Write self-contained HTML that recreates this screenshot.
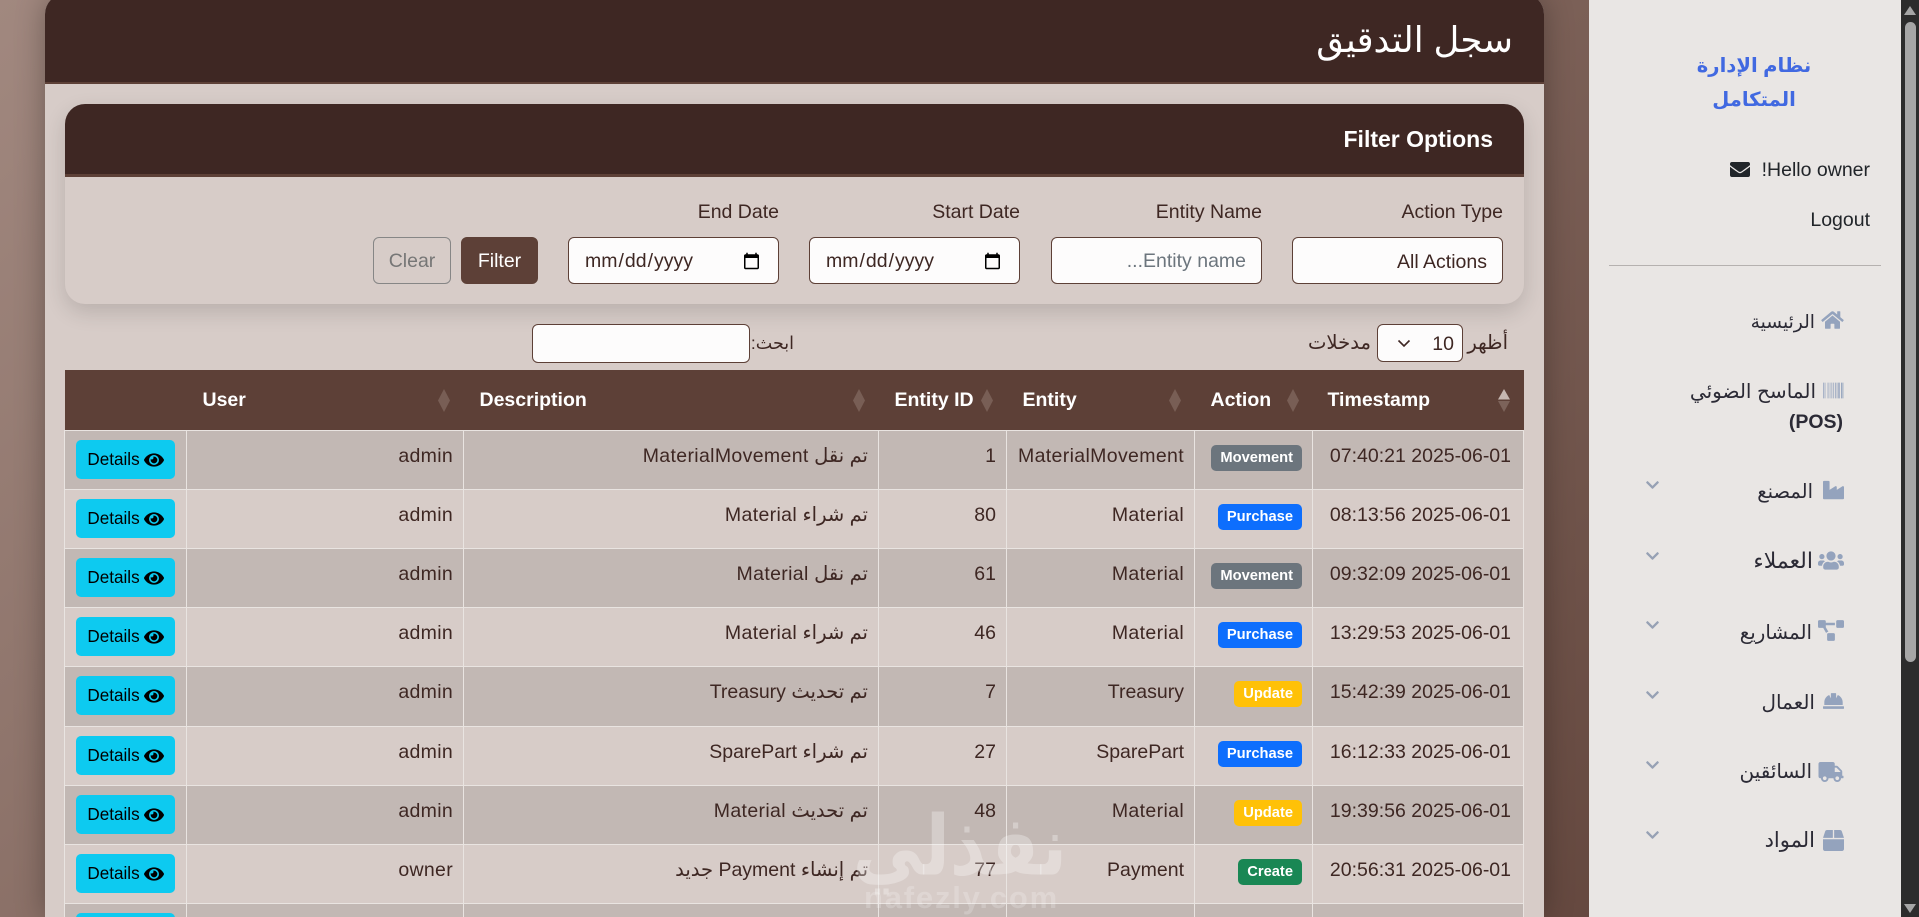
<!DOCTYPE html>
<html lang="ar" dir="rtl">
<head>
<meta charset="utf-8">
<title>سجل التدقيق</title>
<style>
*{box-sizing:border-box}
html,body{margin:0;padding:0;width:1919px;height:917px;overflow:hidden}
body{position:relative;background:linear-gradient(135deg,#a1887f,#5d4037);font-family:"Liberation Sans","DejaVu Sans",sans-serif;font-size:19.5px;color:#3e2723}
.clip{position:absolute;left:0;top:0;width:1919px;height:917px;overflow:hidden}
.main{position:absolute;left:45px;top:-6px;width:1499px;height:923px;background:#d7ccc8;border-radius:20px 20px 0 0;box-shadow:0 0 30px rgba(0,0,0,.3)}
.main-head{position:absolute;left:0;right:0;top:0;height:90px;background:#3e2723;border-bottom:2px solid #5d4037;border-radius:20px 20px 0 0}
.main-head h1{position:absolute;right:31px;top:23px;margin:0;font-weight:400;font-size:35.5px;line-height:46px;color:#fff;white-space:nowrap}
.fcard{position:absolute;left:65px;top:104px;width:1459px;height:200px;background:#d7ccc8;border-radius:20px;box-shadow:0 8px 22px rgba(0,0,0,.14)}
.fhead{position:absolute;left:0;right:0;top:0;height:73px;background:#3e2723;border-bottom:3px solid #5d4037;border-radius:20px 20px 0 0}
.fhead h2{position:absolute;right:31px;top:17px;margin:0;font-size:23px;line-height:36px;color:#fff;font-weight:700;white-space:nowrap}
.lab{position:absolute;top:94px;line-height:28px;text-align:right;white-space:nowrap}
.ctl{position:absolute;top:133px;height:47px;background:#fdfcfc;border:1px solid #5d4037;border-radius:6px;font:19.5px "Liberation Sans",sans-serif;color:#3e2723;padding:2px 15px 0;outline:0;margin:0}
select.ctl{appearance:none;-webkit-appearance:none}
input::placeholder{color:#6c757d;opacity:1}
.btn{position:absolute;top:133px;height:47px;border-radius:6px;font:19.5px "Liberation Sans",sans-serif;padding:2px 0 0;margin:0;text-align:center}
.dt-l{position:absolute;white-space:nowrap;line-height:28px;top:329px}
.tbl{position:absolute;left:64px;top:370px;width:1459px;border-collapse:collapse;table-layout:fixed}
th{height:60px;background:#5d4037;color:#fff;font-weight:700;text-align:left;padding:2px 16px 0;position:relative;white-space:nowrap;font-size:19.5px}
th:first-child{padding-left:15px}
th svg{position:absolute;right:13px;top:19px}
td{height:59px;border:1px solid #e9e4e1;padding:11.5px 10px 0;vertical-align:top;text-align:right;white-space:nowrap;line-height:28px;color:#3e2723}
tr:nth-child(odd) td{background:#c2b8b4}
tr:nth-child(even) td{background:#d7ccc8}
tr.t td{height:60px}
td:first-child{padding-right:12px}
td.u{letter-spacing:.3px}
td.act{padding:9.5px 0 0;text-align:center}
.w{font-style:normal;letter-spacing:.35px}
.bd{display:inline-block;margin-top:3px;height:26px;line-height:26px;padding:0 9px;border-radius:5px;font-size:14.7px;font-weight:700;color:#fff;vertical-align:top}
.mv{background:#6c757d}.pu{background:#0d6efd}.up{background:#ffc107}.cr{background:#198754}
.det{display:inline-flex;align-items:center;justify-content:center;gap:4px;width:99px;height:39px;background:#0dcaf0;border-radius:5px;color:#000;font-size:17.1px;line-height:39px}
.side{position:absolute;left:1589px;top:0;width:312px;height:917px;background:#e9e6e4}
.brand{position:absolute;left:1654px;width:200px;text-align:center;font-weight:700;color:#4169e1;font-size:19.6px;line-height:33.5px;top:50px}
.s{position:absolute;white-space:nowrap;color:#212529}
.m{position:absolute;white-space:nowrap;color:#2b2a35;font-size:19.5px;line-height:28px;text-align:right}
.ic{position:absolute;fill:#94a3bd}
.ch{position:absolute;fill:#97a1b4;left:1646px}
.track{position:absolute;left:1901px;top:0;width:18px;height:917px;background:#2c2c2c}
.thumb{position:absolute;left:1905px;top:22px;width:11px;height:640px;background:#a6a6a6;border-radius:6px}
.wm{position:absolute;color:rgba(255,255,255,.3);white-space:nowrap;pointer-events:none}
</style>
</head>
<body>
<svg width="0" height="0" style="position:absolute"><defs>
<symbol id="eye" viewBox="0 0 576 512"><path d="M572.52 241.4C518.29 135.59 410.93 64 288 64S57.68 135.64 3.48 241.41a32.35 32.35 0 0 0 0 29.19C57.71 376.41 165.07 448 288 448s230.32-71.64 284.52-177.41a32.35 32.35 0 0 0 0-29.19zM288 400a144 144 0 1 1 144-144 143.93 143.93 0 0 1-144 144zm0-240a95.31 95.31 0 0 0-25.31 3.79 47.85 47.85 0 0 1-66.9 66.9A95.78 95.78 0 1 0 288 160z"/></symbol>
<symbol id="chev" viewBox="0 100 448 310"><path d="M207.029 381.476L12.686 187.132c-9.373-9.373-9.373-24.569 0-33.941l22.667-22.667c9.357-9.357 24.522-9.375 33.901-.04L224 284.505l154.745-154.021c9.379-9.335 24.544-9.317 33.901.04l22.667 22.667c9.373 9.373 9.373 24.569 0 33.941L240.971 381.476c-9.373 9.372-24.569 9.372-33.942 0z"/></symbol>
<symbol id="sort" viewBox="0 0 14 23"><path d="M7 0l6 11.5H1zM7 23l6-11.5H1z" fill="#785e55"/></symbol>
</defs></svg>

<div class="clip">
<div class="main"><div class="main-head"><h1>سجل التدقيق</h1></div></div>

<div class="fcard">
  <div class="fhead"><h2>Filter Options</h2></div>
  <label class="lab" style="right:21px">Action Type</label>
  <label class="lab" style="right:262px">Entity Name</label>
  <label class="lab" style="right:504px">Start Date</label>
  <label class="lab" style="right:745px">End Date</label>
  <select class="ctl" dir="rtl" style="left:1227px;width:211px"><option>All Actions</option></select>
  <input class="ctl" dir="rtl" style="left:986px;width:211px" placeholder="Entity name...">
  <input class="ctl" dir="ltr" type="date" style="left:744px;width:211px">
  <input class="ctl" dir="ltr" type="date" style="left:503px;width:211px">
  <button class="btn" style="left:396px;width:77px;background:#5d4037;border:1px solid #5d4037;color:#fff">Filter</button>
  <button class="btn" style="left:308px;width:78px;background:transparent;border:1px solid #868686;color:#767676">Clear</button>
</div>

<div class="dt-l" style="right:411px;font-size:19.5px">أظهر</div>
<select class="ctl" dir="rtl" style="left:1377px;top:324px;width:86px;height:38px;padding:2px 8px 0 0;font-size:19.5px"><option>10</option></select>
<svg style="position:absolute;left:1397px;top:339px" width="14" height="9" viewBox="0 0 14 9"><path d="M1.5 1.5 7 7l5.5-5.5" fill="none" stroke="#3e2723" stroke-width="1.6"/></svg>
<div class="dt-l" style="right:548px;font-size:19.6px">مدخلات</div>
<div class="dt-l" style="right:1125px;font-size:17.5px">ابحث:</div>
<input class="ctl" style="left:532px;top:324px;width:218px;height:39px;padding:0 6px">

<table class="tbl">
<colgroup><col style="width:211px"><col style="width:118px"><col style="width:188px"><col style="width:128px"><col style="width:415px"><col style="width:277px"><col style="width:122px"></colgroup>
<thead><tr>
<th>Timestamp<svg width="14" height="23" viewBox="0 0 14 23"><path d="M7 0l6 10.5H1z" fill="#c6b7b1"/><path d="M7 23l6-11H1z" fill="#7c635a"/></svg></th>
<th>Action<svg width="14" height="23"><use href="#sort"/></svg></th>
<th>Entity<svg width="14" height="23"><use href="#sort"/></svg></th>
<th>Entity ID<svg width="14" height="23"><use href="#sort"/></svg></th>
<th>Description<svg width="14" height="23"><use href="#sort"/></svg></th>
<th>User<svg width="14" height="23"><use href="#sort"/></svg></th>
<th></th>
</tr></thead>
<tbody>
<tr><td>2025-06-01 07:40:21</td><td><span class="bd mv">Movement</span></td><td><i class="w">MaterialMovement</i></td><td>1</td><td>تم نقل <i class="w">MaterialMovement</i></td><td class="u">admin</td><td class="act"><a class="det"><svg width="20" height="18"><use href="#eye"/></svg>Details</a></td></tr>
<tr><td>2025-06-01 08:13:56</td><td><span class="bd pu">Purchase</span></td><td><i class="w">Material</i></td><td>80</td><td>تم شراء <i class="w">Material</i></td><td class="u">admin</td><td class="act"><a class="det"><svg width="20" height="18"><use href="#eye"/></svg>Details</a></td></tr>
<tr><td>2025-06-01 09:32:09</td><td><span class="bd mv">Movement</span></td><td><i class="w">Material</i></td><td>61</td><td>تم نقل <i class="w">Material</i></td><td class="u">admin</td><td class="act"><a class="det"><svg width="20" height="18"><use href="#eye"/></svg>Details</a></td></tr>
<tr><td>2025-06-01 13:29:53</td><td><span class="bd pu">Purchase</span></td><td><i class="w">Material</i></td><td>46</td><td>تم شراء <i class="w">Material</i></td><td class="u">admin</td><td class="act"><a class="det"><svg width="20" height="18"><use href="#eye"/></svg>Details</a></td></tr>
<tr class="t"><td>2025-06-01 15:42:39</td><td><span class="bd up">Update</span></td><td>Treasury</td><td>7</td><td>تم تحديث Treasury</td><td class="u">admin</td><td class="act"><a class="det"><svg width="20" height="18"><use href="#eye"/></svg>Details</a></td></tr>
<tr><td>2025-06-01 16:12:33</td><td><span class="bd pu">Purchase</span></td><td>SparePart</td><td>27</td><td>تم شراء SparePart</td><td class="u">admin</td><td class="act"><a class="det"><svg width="20" height="18"><use href="#eye"/></svg>Details</a></td></tr>
<tr><td>2025-06-01 19:39:56</td><td><span class="bd up">Update</span></td><td><i class="w">Material</i></td><td>48</td><td>تم تحديث <i class="w">Material</i></td><td class="u">admin</td><td class="act"><a class="det"><svg width="20" height="18"><use href="#eye"/></svg>Details</a></td></tr>
<tr><td>2025-06-01 20:56:31</td><td><span class="bd cr">Create</span></td><td>Payment</td><td>77</td><td>تم إنشاء Payment جديد</td><td class="u">owner</td><td class="act"><a class="det"><svg width="20" height="18"><use href="#eye"/></svg>Details</a></td></tr>
<tr><td>&nbsp;</td><td></td><td></td><td></td><td></td><td></td><td class="act"><a class="det"></a></td></tr>
</tbody>
</table>

<div class="side"></div>
<div class="brand">نظام الإدارة<br>المتكامل</div>
<div class="s" style="right:49px;top:156px;line-height:28px">Hello owner!</div>
<svg style="position:absolute;left:1730px;top:162px;fill:#212529" width="20" height="15" viewBox="0 64 512 384"><path d="M502.3 190.8c3.9-3.1 9.7-.2 9.7 4.7V400c0 26.5-21.5 48-48 48H48c-26.5 0-48-21.5-48-48V195.6c0-5 5.7-7.8 9.7-4.7 22.4 17.4 52.1 39.5 154.1 113.6 21.1 15.4 56.7 47.8 92.2 47.6 35.7.3 72-32.8 92.3-47.6 102-74.1 131.6-96.3 154-113.7zM256 320c23.2.4 56.6-29.2 73.4-41.4 132.7-96.3 142.8-104.7 173.4-128.7 5.8-4.5 9.2-11.5 9.2-18.9v-19c0-26.5-21.5-48-48-48H48C21.5 64 0 85.5 0 112v19c0 7.4 3.4 14.3 9.2 18.9 30.6 23.9 40.7 32.4 173.4 128.7 16.8 12.2 50.2 41.8 73.4 41.4z"/></svg>
<div class="s" style="right:49px;top:206px;line-height:28px">Logout</div>
<div style="position:absolute;left:1609px;top:265px;width:272px;height:1px;background:#b5b1af"></div>

<svg class="ic" style="left:1821px;top:310px" width="23" height="20" viewBox="0 0 576 512"><path d="M280.37 148.26L96 300.11V464a16 16 0 0 0 16 16l112.06-.29a16 16 0 0 0 15.92-16V368a16 16 0 0 1 16-16h64a16 16 0 0 1 16 16v95.64a16 16 0 0 0 16 16.05L464 480a16 16 0 0 0 16-16V300L295.67 148.26a12.19 12.19 0 0 0-15.3 0zM571.6 251.47L488 182.56V44.05a12 12 0 0 0-12-12h-56a12 12 0 0 0-12 12v72.61L318.47 43a48 48 0 0 0-61 0L4.34 251.47a12 12 0 0 0-1.6 16.9l25.5 31A12 12 0 0 0 45.15 301l235.22-193.74a12.19 12.19 0 0 1 15.3 0L530.9 301a12 12 0 0 0 16.9-1.6l25.5-31a12 12 0 0 0-1.7-16.93z"/></svg>
<div class="m" style="right:104px;top:308px;font-size:18.7px">الرئيسية</div>

<svg class="ic" style="left:1823px;top:381px" width="21" height="19" viewBox="0 64 512 384"><path d="M0 448V64h18v384H0zm27 0V64h9v384h-9zm27 0V64h9v384h-9zm45 0V64h9v384h-9zm36 0V64h18v384h-18zm45 0V64h9v384h-9zm18 0V64h9v384h-9zm18 0V64h9v384h-9zm36 0V64h18v384h-18zm45 0V64h18v384h-18zm36 0V64h18v384h-18zm36 0V64h18v384h-18zm27 0V64h18v384h-18zm45 0V64h27v384h-27zm36 0V64h9v384h-9zm19 0V64h9v384h-9z"/></svg>
<div class="m" style="right:103px;top:378px;font-size:20px">الماسح الضوئي</div>
<div class="m" style="right:76px;top:408px;font-weight:700">(POS)</div>

<svg class="ic" style="left:1823px;top:480px" width="21" height="20" viewBox="0 32 512 448"><path d="M475.115 163.781L336 252.309v-68.28c0-18.916-20.931-30.399-36.885-20.248L160 252.309V56c0-13.255-10.745-24-24-24H24C10.745 32 0 42.745 0 56v400c0 13.255 10.745 24 24 24h464c13.255 0 24-10.745 24-24V184.029c0-18.917-20.931-30.399-36.885-20.248z"/></svg>
<div class="m" style="right:106px;top:478px">المصنع</div>
<svg class="ch" style="top:480px" width="13" height="10"><use href="#chev"/></svg>

<svg class="ic" style="left:1818px;top:551px" width="26" height="19" viewBox="0 32 640 448"><path d="M96 224c35.3 0 64-28.7 64-64s-28.7-64-64-64-64 28.7-64 64 28.7 64 64 64zm448 0c35.3 0 64-28.7 64-64s-28.7-64-64-64-64 28.7-64 64 28.7 64 64 64zm32 32h-64c-17.6 0-33.5 7.1-45.1 18.6 40.3 22.1 68.9 62 75.1 109.4h66c17.7 0 32-14.3 32-32v-32c0-35.3-28.7-64-64-64zm-256 0c61.9 0 112-50.1 112-112S381.9 32 320 32 208 82.1 208 144s50.1 112 112 112zm76.8 32h-8.3c-20.8 10-43.9 16-68.5 16s-47.6-6-68.5-16h-8.3C179.6 288 128 339.6 128 403.2V432c0 26.5 21.5 48 48 48h288c26.5 0 48-21.5 48-48v-28.8c0-63.6-51.6-115.2-115.2-115.2zm-223.7-13.4C161.5 263.1 145.6 256 128 256H64c-35.3 0-64 28.7-64 64v32c0 17.7 14.3 32 32 32h65.9c6.3-47.4 34.9-87.3 75.2-109.4z"/></svg>
<div class="m" style="right:106px;top:547px;font-size:22px">العملاء</div>
<svg class="ch" style="top:551px" width="13" height="10"><use href="#chev"/></svg>

<svg class="ic" style="left:1818px;top:620px" width="26" height="21" viewBox="0 0 640 512"><path d="M384 320H256c-17.67 0-32 14.33-32 32v128c0 17.67 14.33 32 32 32h128c17.67 0 32-14.33 32-32V352c0-17.67-14.33-32-32-32zM192 32c0-17.67-14.33-32-32-32H32C14.33 0 0 14.33 0 32v128c0 17.67 14.33 32 32 32h95.72l73.16 128.04C211.98 300.98 232.4 288 256 288h.28L192 175.51V128h224V64H192V32zM608 0H480c-17.67 0-32 14.33-32 32v128c0 17.67 14.33 32 32 32h128c17.67 0 32-14.33 32-32V32c0-17.67-14.33-32-32-32z"/></svg>
<div class="m" style="right:107px;top:619px;font-size:19.8px">المشاريع</div>
<svg class="ch" style="top:620px" width="13" height="10"><use href="#chev"/></svg>

<svg class="ic" style="left:1823px;top:693px" width="21" height="16" viewBox="0 64 512 384"><path d="M480 288c0-80.25-49.28-148.92-119.19-177.62L320 192V80a16 16 0 0 0-16-16h-96a16 16 0 0 0-16 16v112l-40.81-81.62C81.28 139.08 32 207.75 32 288v64h448zm16 96H16a16 16 0 0 0-16 16v32a16 16 0 0 0 16 16h480a16 16 0 0 0 16-16v-32a16 16 0 0 0-16-16z"/></svg>
<div class="m" style="right:104px;top:689px;font-size:20px">العمال</div>
<svg class="ch" style="top:690px" width="13" height="10"><use href="#chev"/></svg>

<svg class="ic" style="left:1818px;top:762px" width="26" height="20" viewBox="0 0 640 512"><path d="M624 352h-16V243.9c0-12.7-5.1-24.9-14.1-33.9L494 110.1c-9-9-21.2-14.1-33.9-14.1H416V48c0-26.5-21.5-48-48-48H48C21.5 0 0 21.5 0 48v320c0 26.5 21.5 48 48 48h16c0 53 43 96 96 96s96-43 96-96h128c0 53 43 96 96 96s96-43 96-96h48c8.8 0 16-7.2 16-16v-32c0-8.8-7.2-16-16-16zM160 464c-26.5 0-48-21.5-48-48s21.5-48 48-48 48 21.5 48 48-21.5 48-48 48zm320 0c-26.5 0-48-21.5-48-48s21.5-48 48-48 48 21.5 48 48-21.5 48-48 48zm80-208H416V144h44.1l99.9 99.9V256z"/></svg>
<div class="m" style="right:107px;top:758px;font-size:20px">السائقين</div>
<svg class="ch" style="top:760px" width="13" height="10"><use href="#chev"/></svg>

<svg class="ic" style="left:1823px;top:830px" width="21" height="21" viewBox="0 0 512 512"><path d="M509.5 184.6L458.9 32.8C452.4 13.2 434.1 0 413.4 0H272v192h238.7c-.4-2.5-.4-5-1.2-7.4zM240 0H98.6c-20.7 0-39 13.2-45.5 32.8L2.5 184.6c-.8 2.4-.8 4.9-1.2 7.4H240V0zM0 224v240c0 26.5 21.5 48 48 48h416c26.5 0 48-21.5 48-48V224H0z"/></svg>
<div class="m" style="right:104px;top:827px;font-size:21px">المواد</div>
<svg class="ch" style="top:830px" width="13" height="10"><use href="#chev"/></svg>

<div class="track"></div>
<div class="thumb"></div>
<svg style="position:absolute;left:1904px;top:6px" width="12" height="9" viewBox="0 0 12 9"><path d="M6 0l6 9H0z" fill="#a6a6a6"/></svg>
<svg style="position:absolute;left:1904px;top:904px" width="12" height="9" viewBox="0 0 12 9"><path d="M6 9l6-9H0z" fill="#a6a6a6"/></svg>

<div class="wm" style="left:853px;top:796px;font-size:70px;line-height:100px;font-weight:700;direction:rtl;width:214px;text-align:center;transform:scaleY(1.18)">نفذلي</div>
<div class="wm" dir="ltr" style="left:864px;top:882px;font-size:31px;line-height:32px;font-weight:700;letter-spacing:1.8px;width:205px;color:rgba(255,255,255,.2)">nafezly.com</div>
</div>
</body>
</html>
